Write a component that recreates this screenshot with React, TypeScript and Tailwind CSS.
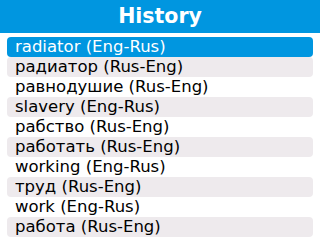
const entries = [
	"radiator (Eng-Rus)",
	"радиатор (Rus-Eng)",
	"равнодушие (Rus-Eng)",
	"slavery (Eng-Rus)",
	"рабство (Rus-Eng)",
	"работать (Rus-Eng)",
	"working (Eng-Rus)",
	"труд (Rus-Eng)",
	"work (Eng-Rus)",
	"работа (Rus-Eng)",
];

export default function App() {
	const selected = 0;

	return (
		<main className="h-[240px] w-[320px] overflow-hidden bg-white font-['DejaVu_Sans',sans-serif]">
			<header className="flex h-[33px] items-center justify-center bg-[#0096e0]">
				<h1 className="text-[20.5px] font-bold leading-none text-white">History</h1>
			</header>
			<ul className="flex flex-col px-[7px] pt-[4px]">
				{entries.map((item, i) => (
					<li
						key={item}
						className={
							i === selected
								? "flex h-[20px] items-center rounded-[4px] bg-[#0096e0] pl-[8px] text-[16.5px] leading-none text-white"
								: i % 2 === 1
									? "flex h-[20px] items-center rounded-[4px] bg-[#eeeaed] pl-[8px] text-[16.5px] leading-none text-black"
									: "flex h-[20px] items-center pl-[8px] text-[16.5px] leading-none text-black"
						}
					>
						{item}
					</li>
				))}
			</ul>
		</main>
	);
}
